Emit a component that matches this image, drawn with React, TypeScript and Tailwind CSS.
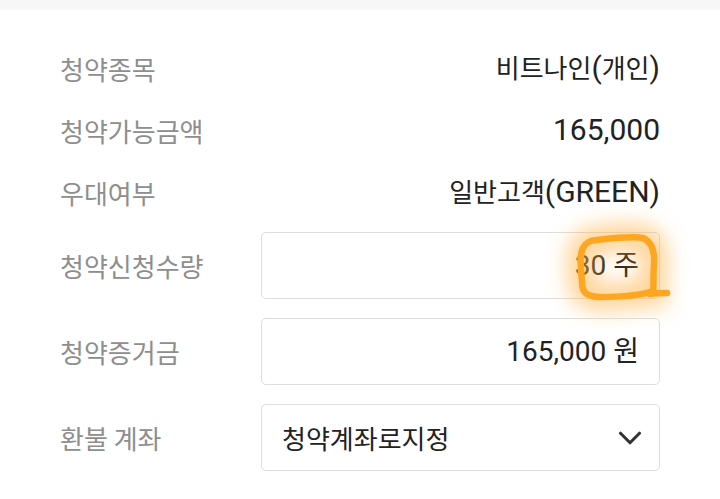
import { ChevronDown } from "lucide-react";

const ko = { fontFamily: '"Noto Sans CJK KR", sans-serif' };
const num = { fontFamily: 'Roboto, "Noto Sans CJK KR", sans-serif' };

function InfoRow({ label, children }: { label: string; children: React.ReactNode }) {
  return (
    <div className="flex h-[62px] items-center justify-between">
      <span className="text-[26px] text-[#8e8e8e]" style={ko}>
        {label}
      </span>
      <span className="text-[30px] leading-none text-[#222]" style={num}>
        {children}
      </span>
    </div>
  );
}

function FieldRow({ label, children }: { label: string; children: React.ReactNode }) {
  return (
    <div className="flex items-center">
      <span className="w-[201px] shrink-0 text-[26px] text-[#8e8e8e]" style={ko}>
        {label}
      </span>
      <div className="relative flex h-[67px] flex-1 items-center rounded-[5px] border-[1.5px] border-[#dedede] bg-white px-[20px]">
        {children}
      </div>
    </div>
  );
}

function Annotation() {
  const d =
    "M596 240 C 615 238, 632 236, 643 238 C 652 242, 655 252, 654 265 C 653 276, 654 286, 653 291 C 640 296, 615 297, 598 297 C 586 296, 582 292, 582 282 C 581 268, 579 256, 583 248 C 586 242, 590 240, 598 240 M 650 294 C 656 293, 661 293, 667 293";
  return (
    <svg
      className="pointer-events-none absolute left-0 top-0"
      width={720}
      height={499}
      viewBox="0 0 720 499"
    >
      <defs>
        <filter id="glow" x="-50%" y="-50%" width="200%" height="200%">
          <feGaussianBlur stdDeviation="10" />
        </filter>
      </defs>
      <path d={d} fill="none" stroke="#ffb347" strokeOpacity={0.55} strokeWidth={28} filter="url(#glow)" />
      <path d={d} fill="none" stroke="#ffa620" strokeWidth={6.5} strokeLinecap="round" strokeLinejoin="round" />
    </svg>
  );
}

export default function App() {
  return (
    <div className="relative h-[499px] w-[720px] overflow-hidden bg-white">
      <div className="h-[10px] bg-[#f7f7f7]" />
      <div className="flex flex-col px-[60px] pt-[27px]">
        <InfoRow label="청약종목">
          <span className="text-[26px]" style={ko}>비트나인</span>(<span className="text-[26px]" style={ko}>개인</span>)
        </InfoRow>
        <InfoRow label="청약가능금액">165,000</InfoRow>
        <InfoRow label="우대여부">
          <span className="text-[26px]" style={ko}>일반고객</span>(GREEN)
        </InfoRow>
        <div className="flex flex-col gap-[19px] pt-[9px]">
          <FieldRow label="청약신청수량">
            <span className="ml-auto text-[28px] text-[#222]" style={num}>
              30 주
            </span>
          </FieldRow>
          <FieldRow label="청약증거금">
            <span className="ml-auto text-[28px] text-[#222]" style={num}>
              165,000 원
            </span>
          </FieldRow>
          <FieldRow label="환불 계좌">
            <span className="text-[26px] text-[#222]" style={ko}>
              청약계좌로지정
            </span>
            <ChevronDown className="ml-auto mr-[-10px] h-[38px] w-[38px] text-[#333]" strokeWidth={2} />
          </FieldRow>
        </div>
      </div>
      <Annotation />
    </div>
  );
}
